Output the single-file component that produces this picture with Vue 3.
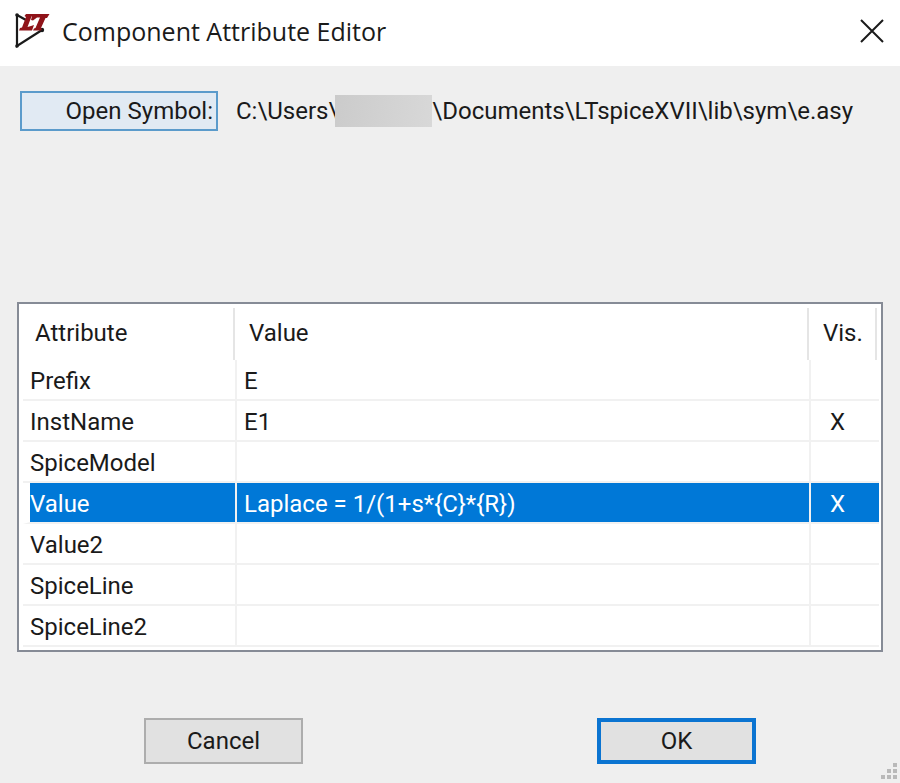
<script setup>
import { ref } from 'vue'

const rows = [
  { name: 'Prefix', value: 'E', visible: false },
  { name: 'InstName', value: 'E1', visible: true },
  { name: 'SpiceModel', value: '', visible: false },
  { name: 'Value', value: 'Laplace = 1/(1+s*{C}*{R})', visible: true },
  { name: 'Value2', value: '', visible: false },
  { name: 'SpiceLine', value: '', visible: false },
  { name: 'SpiceLine2', value: '', visible: false },
]
const selected = ref('Value')
</script>

<template>
  <main class="dialog">
    <header class="titlebar">
      <svg class="logo" viewBox="0 0 36 36" aria-hidden="true">
        <path d="M3 2V33L28 17M3 2L12 7" fill="none" stroke="#1a1a1a" stroke-width="2.2" />
        <circle cx="3" cy="2" r="1.8" fill="#1a1a1a" />
        <circle cx="3" cy="33" r="1.8" fill="#1a1a1a" />
        <circle cx="28" cy="17" r="2.2" fill="#1a1a1a" />
        <path d="M12 1H20L19 3L17.500 3.500L13.500 14L17 13L20 12L18 17.500H5L6 15L8 14.500L12 4L10.500 3Z" fill="#8f1319" />
        <path d="M18.500 1H35.500L33 5L31.500 5L27 15L28 16L27 17.500H19L20 15.500L21.500 15L26 4.500H23L19 7.500L17 7Z" fill="#8f1319" />
      </svg>
      <h1 class="title">Component Attribute Editor</h1>
      <button class="close" type="button" aria-label="Close">
        <svg class="close-icon" viewBox="0 0 24 24" aria-hidden="true">
          <path d="M1 1L23 23M23 1L1 23" fill="none" stroke="#1a1a1a" stroke-width="2" />
        </svg>
      </button>
    </header>

    <section class="symbol">
      <button class="open" type="button">Open Symbol:</button>
      <p class="path">
        <span>C:\Users\</span><span class="hidden-name"></span><span>\Documents\LTspiceXVII\lib\sym\e.asy</span>
      </p>
    </section>

    <section class="list">
      <table class="grid">
        <thead>
          <tr>
            <th class="col-name"><div class="head">Attribute</div></th>
            <th><div class="head">Value</div></th>
            <th class="col-vis"><div class="head">Vis.</div></th>
          </tr>
        </thead>
        <tbody>
          <tr
            v-for="row in rows"
            :key="row.name"
            :class="{ selected: row.name === selected }"
            @click="selected = row.name"
          >
            <td class="name">{{ row.name }}</td>
            <td class="value">{{ row.value }}</td>
            <td class="vis">{{ row.visible ? 'X' : '' }}</td>
          </tr>
        </tbody>
      </table>
    </section>

    <footer class="actions">
      <button class="action" type="button">Cancel</button>
      <button class="action primary" type="button">OK</button>
    </footer>

    <svg class="grip" viewBox="0 0 18 18" aria-hidden="true">
      <path d="M13 1h4v4h-4zM7 7h4v4h-4zM13 7h4v4h-4zM1 13h4v4h-4zM7 13h4v4h-4zM13 13h4v4h-4z" fill="#b9b9b9" />
    </svg>
  </main>
</template>

<style>
body {
  margin: 0;
  background: #efefef;
}
</style>

<style scoped>
.dialog {
  position: relative;
  box-sizing: border-box;
  min-height: 100vh;
  padding-bottom: 20px;
  background: #efefef;
  color: #1a1a1a;
  font-family: Roboto, "Liberation Sans", sans-serif;
  font-size: 24px;
  line-height: 32px;
}

button {
  box-sizing: border-box;
  margin: 0;
  font: inherit;
  color: inherit;
}

.titlebar {
  display: flex;
  align-items: center;
  height: 66px;
  box-sizing: border-box;
  padding: 0 16px 4px 14px;
  background: #fff;
}

.logo {
  width: 36px;
  height: 36px;
}

.title {
  flex: 1;
  margin: 0 0 0 12px;
  font-family: "Open Sans", "Noto Sans", sans-serif;
  font-size: 25px;
  font-weight: 400;
}

.close {
  display: flex;
  padding: 0;
  border: 0;
  background: none;
}

.close-icon {
  width: 24px;
  height: 24px;
}

.symbol {
  display: flex;
  align-items: center;
  gap: 18px;
  padding: 25px 20px 0;
}

.open {
  width: 198px;
  height: 40px;
  padding: 0 3px 0 0;
  border: 2px solid #5b9bcb;
  background: #e1eaf3;
  text-align: right;
  line-height: 36px;
}

.path {
  display: flex;
  align-items: center;
  margin: 0;
  white-space: nowrap;
}

.hidden-name {
  width: 97px;
  height: 32px;
  margin-left: -3px;
  background: linear-gradient(100deg, #cbcbcb, #d8d8d8);
}

.list {
  margin: 171px 17px 0;
  padding: 4px 2px 3px 4px;
  border: 2px solid #868b96;
  background: #fff;
}

.grid {
  width: 100%;
  table-layout: fixed;
  border-collapse: separate;
  border-spacing: 0;
}

th,
td {
  padding: 0;
  text-align: left;
  font-weight: 400;
}

.col-name {
  width: 214px;
}

.col-vis {
  width: 68px;
}

.head {
  box-sizing: border-box;
  height: 52px;
  margin-right: 2px;
  padding-left: 12px;
  border-right: 2px solid #e5e5e5;
  line-height: 51px;
}

td {
  box-sizing: border-box;
  height: 41px;
  padding: 3px 0 0 7px;
  border-right: 2px solid #f1f1f1;
  border-bottom: 2px solid #f1f1f1;
  line-height: 36px;
}

.vis {
  padding-left: 19px;
  border-right: 0;
}

.selected td {
  background: #0078d7;
  background-clip: padding-box;
  color: #fff;
}

.selected .name {
  padding-left: 0;
  border-left: 7px solid #fff;
}

.actions {
  display: flex;
  justify-content: space-between;
  padding: 66px 16% 0;
}

.action {
  width: 159px;
  height: 46px;
  padding: 0;
  border: 2px solid #adadad;
  background: #e1e1e1;
  line-height: 42px;
}

.primary {
  border: 4px solid #0b74d1;
  line-height: 38px;
}

.grip {
  position: absolute;
  right: 2px;
  bottom: 4px;
  width: 18px;
  height: 18px;
}
</style>
